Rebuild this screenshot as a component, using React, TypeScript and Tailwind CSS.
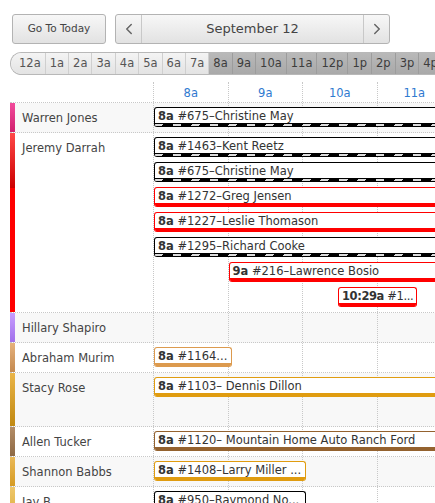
import { ChevronLeft, ChevronRight } from 'lucide-react';

type Kind = 'hatch' | 'red' | 'tan' | 'gold' | 'brown';

interface Appt {
  time: string;
  label: string;
  start: number; // hours after 8a
  width: number;
  kind: Kind;
  tight?: boolean;
}

interface Tech {
  name: string;
  bar: string;
  rowHeight: string;
  appts: Appt[];
}

const HOUR = 74.5;

const hours = ['12a', '1a', '2a', '3a', '4a', '5a', '6a', '7a', '8a', '9a', '10a', '11a', '12p', '1p', '2p', '3p', '4p', '5p'];
const visible = ['8a', '9a', '10a', '11a', '12p', '1p'];

const kindStyles: Record<Kind, { box: string; strip: string }> = {
  hatch: { box: 'border-black', strip: 'bg-black' },
  red: { box: 'border-[#ff0000]', strip: 'bg-[#ff0000]' },
  tan: { box: 'border-[#dc9a4e]', strip: 'bg-[#dc9a4e]' },
  gold: { box: 'border-[#e09c10]', strip: 'bg-[#e09c10]' },
  brown: { box: 'border-[#94622f]', strip: 'bg-[#94622f]' },
};

const techs: Tech[] = [
  {
    name: 'Warren Jones',
    bar: 'bg-[linear-gradient(#f24b9c,#d01f6d)]',
    rowHeight: 'min-h-[29px]',
    appts: [{ time: '8a', label: '#675–Christine May', start: 0, width: 400, kind: 'hatch' }],
  },
  {
    name: 'Jeremy Darrah',
    bar: 'bg-[linear-gradient(#ff4848,#cc0000_55px,#ff0000_55px)]',
    rowHeight: 'min-h-[29px]',
    appts: [
      { time: '8a', label: '#1463–Kent Reetz', start: 0, width: 400, kind: 'hatch' },
      { time: '8a', label: '#675–Christine May', start: 0, width: 400, kind: 'hatch' },
      { time: '8a', label: '#1272–Greg Jensen', start: 0, width: 400, kind: 'red' },
      { time: '8a', label: '#1227–Leslie Thomason', start: 0, width: 400, kind: 'red' },
      { time: '8a', label: '#1295–Richard Cooke', start: 0, width: 400, kind: 'hatch' },
      { time: '9a', label: '#216–Lawrence Bosio', start: 1, width: 400, kind: 'red' },
      { time: '10:29a', label: '#1...', start: 2.47, width: 79, kind: 'red', tight: true },
    ],
  },
  {
    name: 'Hillary Shapiro',
    bar: 'bg-[linear-gradient(#c89dff,#a070ea)]',
    rowHeight: 'min-h-[29px]',
    appts: [],
  },
  {
    name: 'Abraham Murim',
    bar: 'bg-[linear-gradient(#e6b27c,#c4894f)]',
    rowHeight: 'min-h-[29px]',
    appts: [{ time: '8a', label: '#1164...', start: 0, width: 78, kind: 'tan' }],
  },
  {
    name: 'Stacy Rose',
    bar: 'bg-[linear-gradient(#eab548,#c08811)]',
    rowHeight: 'min-h-[54px]',
    appts: [{ time: '8a', label: '#1103– Dennis Dillon', start: 0, width: 400, kind: 'gold' }],
  },
  {
    name: 'Allen Tucker',
    bar: 'bg-[linear-gradient(#b48d66,#8d6843)]',
    rowHeight: 'min-h-[29px]',
    appts: [{ time: '8a', label: '#1120– Mountain Home Auto Ranch Ford', start: 0, width: 400, kind: 'brown' }],
  },
  {
    name: 'Shannon Babbs',
    bar: 'bg-[linear-gradient(#eab958,#d59a22)]',
    rowHeight: 'min-h-[29px]',
    appts: [{ time: '8a', label: '#1408–Larry Miller ...', start: 0, width: 152, kind: 'gold' }],
  },
  {
    name: 'Jay B',
    bar: 'bg-[linear-gradient(#efc76a,#dcae40)]',
    rowHeight: 'min-h-[29px]',
    appts: [{ time: '8a', label: '#950–Raymond No...', start: 0, width: 152, kind: 'hatch' }],
  },
];

function Appointment({ appt }: { appt: Appt }) {
  const s = kindStyles[appt.kind];
  return (
    <div
      className={`h-[20px] shrink-0 overflow-hidden rounded-[3px] border border-b-0 bg-white ${s.box}`}
      style={{ marginLeft: appt.start * HOUR, width: appt.width }}
    >
      <div
        className={`h-[15px] overflow-hidden whitespace-nowrap px-[3px] text-[11.5px] leading-[16px] text-[#333] ${
          appt.tight ? 'tracking-[-0.4px]' : ''
        }`}
      >
        <span className="font-bold">{appt.time}</span> {appt.label}
      </div>
      {appt.kind === 'hatch' ? (
        <div className="h-[4px] bg-black pt-[1px]">
          <div className="h-[2px] bg-[repeating-linear-gradient(120deg,#dcdcdc_0_7px,#000_7px_16px)]" />
        </div>
      ) : (
        <div className={`h-[4px] ${s.strip}`} />
      )}
    </div>
  );
}

export default function App() {
  return (
    <div className="h-[503px] w-[435px] overflow-hidden bg-white font-['DejaVu_Sans',sans-serif] text-[#444]">
      {/* Toolbar */}
      <div className="flex gap-[9px] pl-[12px] pt-[14px]">
        <button className="h-[30px] w-[94px] rounded-[3px] border border-[#b3b3b3] bg-[linear-gradient(#f7f7f7,#e2e2e2)] text-[10.5px] text-[#444]">
          Go To Today
        </button>
        <div className="flex h-[30px] w-[275px] overflow-hidden rounded-[3px] border border-[#b3b3b3] bg-[linear-gradient(#f7f7f7,#e2e2e2)]">
          <div className="flex w-[26px] items-center justify-center border-r border-[#c8c8c8]">
            <ChevronLeft className="h-[18px] w-[18px] text-[#666]" strokeWidth={2} />
          </div>
          <div className="flex flex-1 items-center justify-center text-[13px] text-[#444]">September 12</div>
          <div className="flex w-[26px] items-center justify-center border-l border-[#c8c8c8]">
            <ChevronRight className="h-[18px] w-[18px] text-[#666]" strokeWidth={2} />
          </div>
        </div>
      </div>

      {/* Hour picker */}
      <div className="ml-[10px] mt-[8px] flex h-[23px] w-max overflow-hidden rounded-l-full border border-r-0 border-[#b8b8b8]">
        {hours.map((h, i) => {
          const on = i >= 8;
          return (
            <div
              key={h}
              className={`flex items-center border-r text-[11.5px] ${i === 0 ? 'pl-[8px] pr-[4px]' : 'px-[4px]'} ${
                on
                  ? 'border-[#9c9c9c] bg-[linear-gradient(#b9b9b9,#a9a9a9)] text-[#3c3c3c]'
                  : 'border-[#cfcfcf] bg-[linear-gradient(#f4f4f4,#e3e3e3)] text-[#555]'
              }`}
            >
              {h}
            </div>
          );
        })}
      </div>

      {/* Schedule */}
      <div className="ml-[10px] w-[600px]">
        <div className="flex h-[28px] border-b border-dotted border-[#c8c8c8]">
          <div className="w-[143px]" />
          <div className="mt-[7px] flex flex-1 border-l border-dotted border-[#c8c8c8]">
            {visible.map((h) => (
              <div
                key={h}
                className="flex w-[74.5px] shrink-0 items-center justify-center border-r border-dotted border-[#c8c8c8] pt-[3px] text-[11.5px] text-[#2f7ad0]"
              >
                {h}
              </div>
            ))}
          </div>
        </div>

        {techs.map((t, i) => (
          <div
            key={t.name}
            className={`flex border-b border-dotted border-[#c8c8c8] ${i % 2 === 0 ? 'bg-[#f8f8f8]' : 'bg-white'} ${t.rowHeight}`}
          >
            <div className="flex w-[143px] shrink-0">
              <div className={`w-[5px] ${t.bar}`} />
              <div className="h-[29px] pl-[7px] pt-[1px] text-[11.5px] leading-[29px] text-[#444]">{t.name}</div>
            </div>
            <div className="relative flex-1 border-l border-dotted border-[#c8c8c8]">
              <div className="absolute inset-0 flex">
                {visible.map((h) => (
                  <div key={h} className="w-[74.5px] shrink-0 border-r border-dotted border-[#c8c8c8]" />
                ))}
              </div>
              <div className="relative flex flex-col gap-[5px] pb-[5px] pt-[4px]">
                {t.appts.map((a, j) => (
                  <Appointment key={j} appt={a} />
                ))}
              </div>
            </div>
          </div>
        ))}
      </div>
    </div>
  );
}
